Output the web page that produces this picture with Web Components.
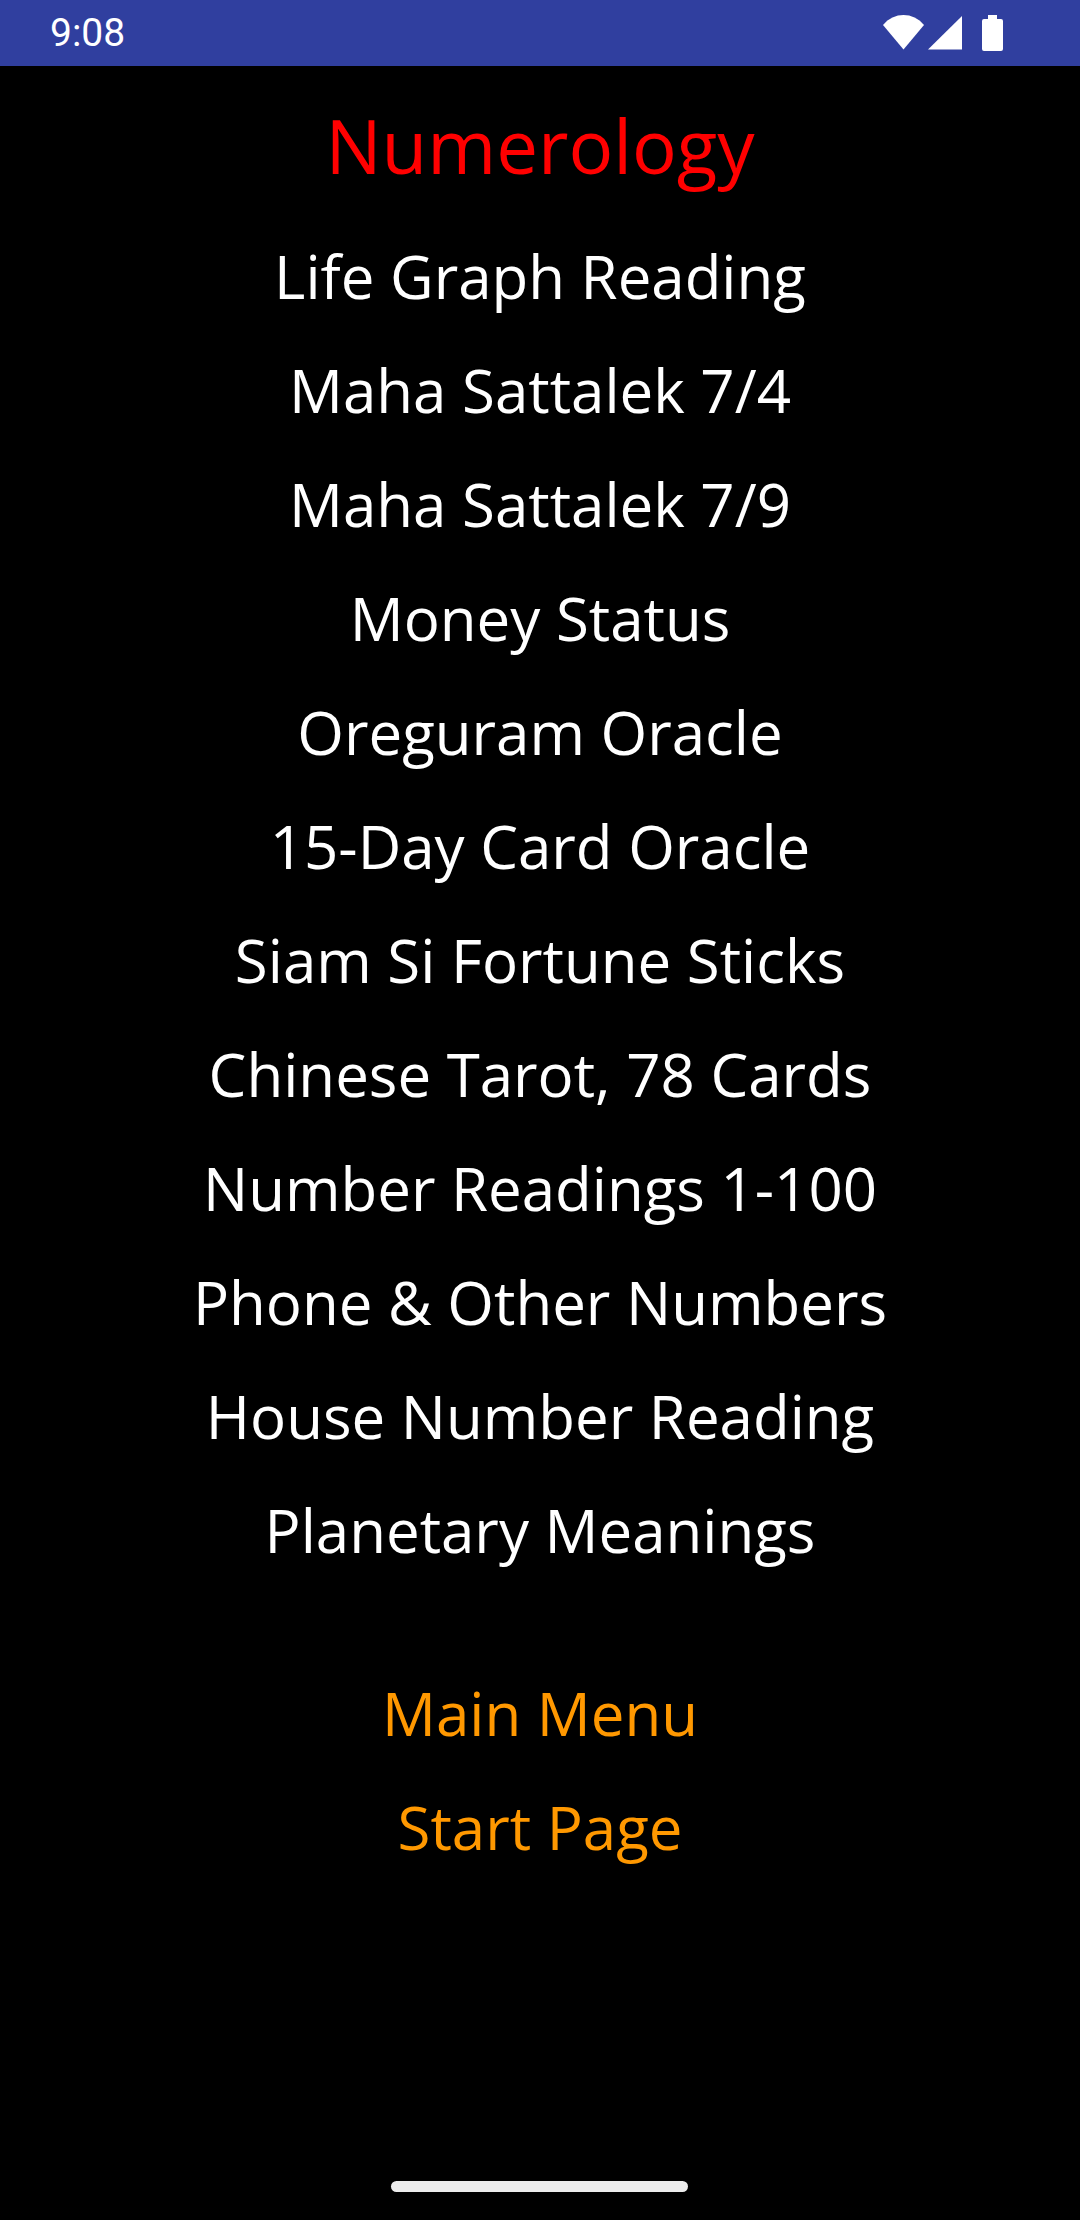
<!DOCTYPE html>
<html>
<head>
<meta charset="utf-8">
<title>Numerology</title>
<style>
  html, body { margin: 0; padding: 0; background: #000; }
  body { width: 1080px; height: 2220px; font-family: "Open Sans", sans-serif; }
</style>
</head>
<body>
<app-screen>
  <status-bar slot="status" time="9:08"></status-bar>
  <menu-title>Numerology</menu-title>
  <menu-item>Life Graph Reading</menu-item>
  <menu-item>Maha Sattalek 7/4</menu-item>
  <menu-item>Maha Sattalek 7/9</menu-item>
  <menu-item>Money Status</menu-item>
  <menu-item>Oreguram Oracle</menu-item>
  <menu-item>15-Day Card Oracle</menu-item>
  <menu-item>Siam Si Fortune Sticks</menu-item>
  <menu-item>Chinese Tarot, 78 Cards</menu-item>
  <menu-item>Number Readings 1-100</menu-item>
  <menu-item>Phone &amp; Other Numbers</menu-item>
  <menu-item>House Number Reading</menu-item>
  <menu-item>Planetary Meanings</menu-item>
  <menu-item nav style="margin-top:69px">Main Menu</menu-item>
  <menu-item nav>Start Page</menu-item>
</app-screen>

<script>
class AppScreen extends HTMLElement {
    constructor() {
        super();
        this.attachShadow({ mode: 'open' });
        this.shadowRoot.innerHTML = `
        <style>
            :host { display: flex; flex-direction: column; width: 1080px; height: 2220px; background: #000; position: relative; overflow: hidden; }
            main { display: flex; flex-direction: column; align-items: stretch; padding-top: 22px; }
            .handle { position: absolute; left: 391px; top: 2181px; width: 297px; height: 11px; border-radius: 6px; background: #ececec; }
        </style>
        <slot name="status"></slot>
        <main><slot></slot></main>
        <div class="handle"></div>
        `;
    }
}

class StatusBar extends HTMLElement {
    constructor() {
        super();
        this.attachShadow({ mode: 'open' });
    }

    connectedCallback() {
        this.shadowRoot.innerHTML = `
        <style>
            :host { display: flex; align-items: center; justify-content: space-between; box-sizing: border-box; height: 66px; padding: 0 77px 0 50px; background: #303f9f; color: #fff; flex: none; }
            .time { font: 39px "Roboto", sans-serif; }
            svg { display: block; }
        </style>
        <span class="time">${this.getAttribute('time')}</span>
        <svg width="120" height="66" viewBox="0 0 120 66" fill="#fff">
            <path d="M0 25 C 11 11.700, 30 11.700, 41 25 L 20.500 49.500 Z" />
            <path d="M45 49.500 L 79 16 V 49.500 Z" />
            <path d="M105 15 H 114 V 19 H 118 Q 120 19 120 21 V 49 Q 120 51 118 51 H 101 Q 99 51 99 49 V 21 Q 99 19 101 19 H 105 Z" />
        </svg>
        `;
    }
}

class MenuTitle extends HTMLElement {
    constructor() {
        super();
        this.attachShadow({ mode: 'open' });
        this.shadowRoot.innerHTML = `
        <style>
            :host { display: block; height: 114px; margin-bottom: 17px; line-height: 114px; text-align: center; color: #f00; font-size: 74.5px; }
        </style>
        <slot></slot>
        `;
    }
}

class MenuItem extends HTMLElement {
    constructor() {
        super();
        this.attachShadow({ mode: 'open' });
        this.shadowRoot.innerHTML = `
        <style>
            :host { display: block; height: 114px; line-height: 114px; text-align: center; color: #fff; font-size: 60px; }
            :host([nav]) { color: #ff9800; }
        </style>
        <slot></slot>
        `;
    }
}

customElements.define('app-screen', AppScreen);
customElements.define('status-bar', StatusBar);
customElements.define('menu-title', MenuTitle);
customElements.define('menu-item', MenuItem);
</script>
</body>
</html>
